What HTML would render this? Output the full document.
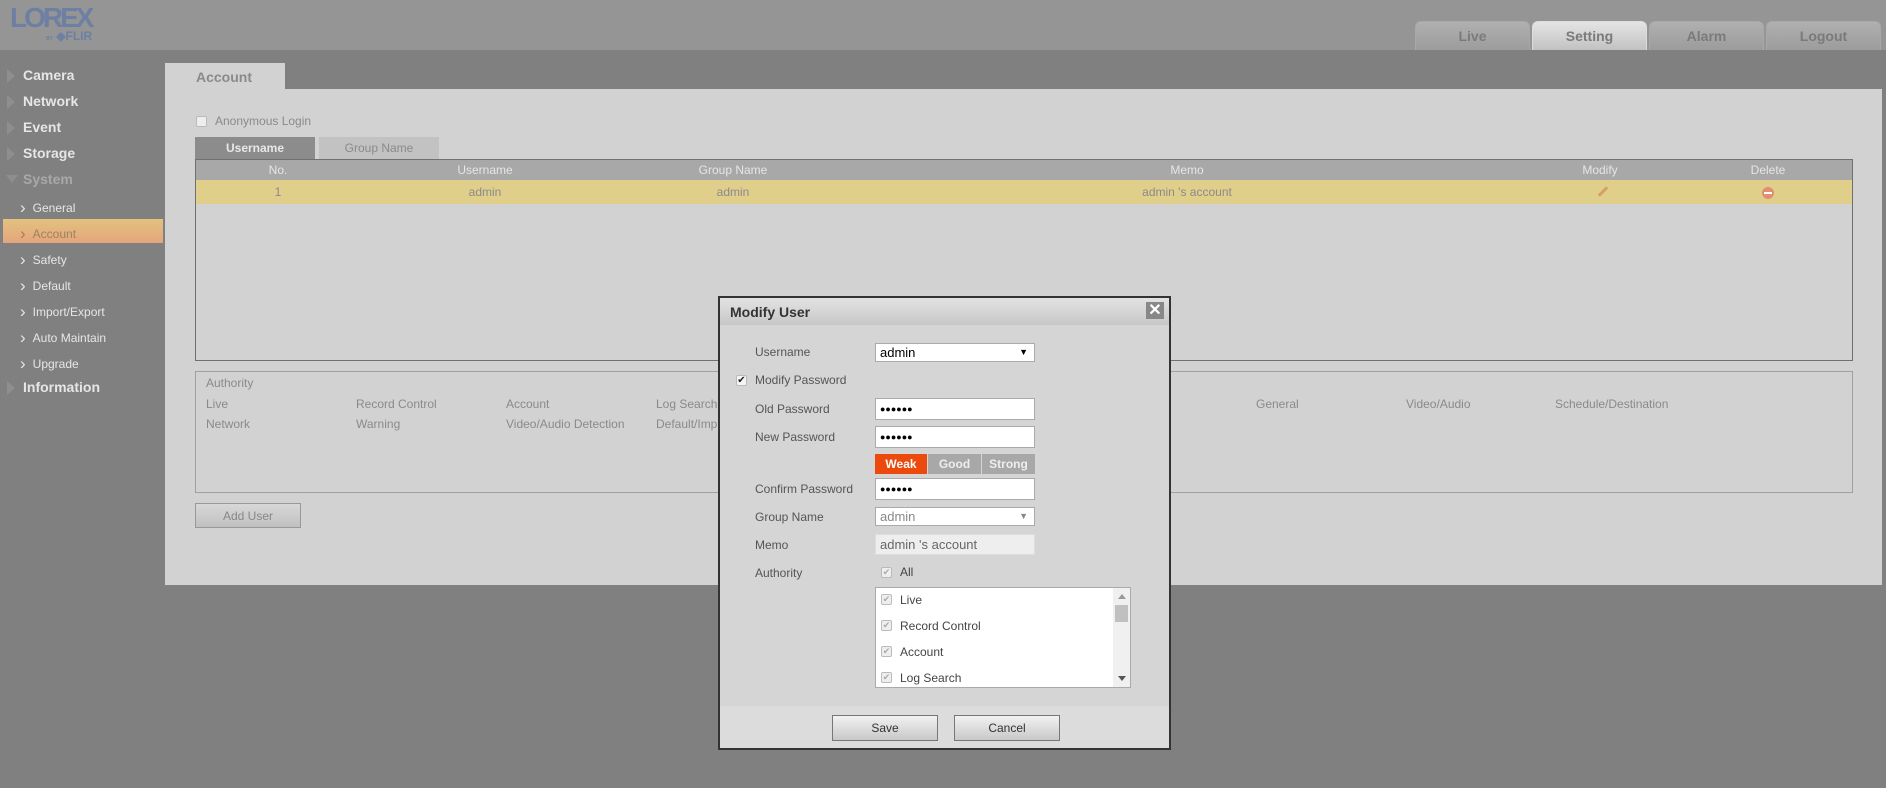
<!DOCTYPE html>
<html><head><style>
*{margin:0;padding:0;box-sizing:border-box}
body{width:1886px;height:788px;background:#808080;font-family:"Liberation Sans",Arial,sans-serif;position:relative;overflow:hidden}
.a{position:absolute}
.hdr{left:0;top:0;width:1886px;height:50px;background:#959595}
.tab{top:21px;height:29px;width:115px;border-radius:6px 6px 0 0;background:linear-gradient(#b0b0b0,#9c9c9c);border:1px solid #a8a8a8;border-bottom:none;color:#7a7a7a;font-weight:bold;font-size:14px;text-align:center;line-height:29px}
.side{left:23px;font-size:14px;font-weight:bold;color:#e6e6e6}
.tri{left:7px;width:0;height:0;border-left:8px solid #8e8e8e;border-top:7px solid transparent;border-bottom:7px solid transparent}
.sub{left:20px;font-size:12px;color:#e6e6e6}
.sub:before{content:"›";font-size:17px;margin-right:7px;position:relative;top:1px}
.t{font-size:12px;color:#8a8a8a;white-space:nowrap}
.lbl{left:755px;font-size:12px;color:#555}
.inp{left:875px;width:160px;background:#fff;border:1px solid #aaa;font-size:13px;padding-left:4px;color:#000}
.cb{width:11px;height:11px;border:1px solid #bbb;background:#eee;border-radius:2px;font-size:9px;line-height:9px;color:#aaa;text-align:center}
.btn{height:26px;width:106px;border:1px solid #777;background:linear-gradient(#f2f2f2,#c8c8c8);font-size:12px;color:#333;text-align:center;line-height:24px}
</style></head><body>
<div class="a hdr"></div>
<div class="a" style="left:10px;top:2px;font:bold 28px 'Liberation Sans';color:#6d7fa3;letter-spacing:-3px">LOREX</div>
<div class="a" style="left:46px;top:29px;font:bold 12px 'Liberation Sans';color:#6d7fa3"><span style="font-size:5px">BY</span> ◆FLIR</div>
<div class="a tab" style="left:1415px">Live</div>
<div class="a tab" style="left:1532px;background:linear-gradient(#e4e4e4,#c2c2c2);border-color:#ddd">Setting</div>
<div class="a tab" style="left:1649px">Alarm</div>
<div class="a tab" style="left:1766px">Logout</div>

<div class="a tri" style="top:69px"></div><div class="a side" style="top:67px">Camera</div>
<div class="a tri" style="top:95px"></div><div class="a side" style="top:93px">Network</div>
<div class="a tri" style="top:121px"></div><div class="a side" style="top:119px">Event</div>
<div class="a tri" style="top:147px"></div><div class="a side" style="top:145px">Storage</div>
<div class="a" style="left:6px;top:175px;width:0;height:0;border-top:8px solid #8e8e8e;border-left:6px solid transparent;border-right:6px solid transparent"></div><div class="a side" style="top:171px;color:#a8a8a8">System</div>
<div class="a sub" style="top:197px">General</div>
<div class="a" style="left:3px;top:219px;width:160px;height:24px;background:linear-gradient(#e3c27e,#e4a57d)"></div>
<div class="a sub" style="top:223px;color:#a08060">Account</div>
<div class="a sub" style="top:249px">Safety</div>
<div class="a sub" style="top:275px">Default</div>
<div class="a sub" style="top:301px">Import/Export</div>
<div class="a sub" style="top:327px">Auto Maintain</div>
<div class="a sub" style="top:353px">Upgrade</div>
<div class="a tri" style="top:381px"></div><div class="a side" style="top:379px">Information</div>

<div class="a" style="left:165px;top:89px;width:1717px;height:496px;background:#d2d2d2"></div>
<div class="a" style="left:165px;top:63px;width:120px;height:27px;background:#d2d2d2;font:bold 14px 'Liberation Sans';color:#8a8a8a;padding:6px 0 0 31px">Account</div>
<div class="a cb" style="left:196px;top:116px"></div><div class="a t" style="left:215px;top:114px">Anonymous Login</div>
<div class="a" style="left:195px;top:137px;width:120px;height:22px;background:#8c8c8c;color:#e8e8e8;font:bold 12px 'Liberation Sans';text-align:center;line-height:22px">Username</div>
<div class="a" style="left:319px;top:137px;width:120px;height:22px;background:#c2c2c2;color:#8a8a8a;font-size:12px;text-align:center;line-height:22px">Group Name</div>
<div class="a" style="left:195px;top:159px;width:1658px;height:202px;border:1px solid #707070"></div>
<div class="a" style="left:196px;top:160px;width:1656px;height:20px;background:#a8a8a8"></div>
<div class="a" style="left:196px;top:180px;width:1656px;height:24px;background:#e0cf8a"></div>
<div class="a t" style="left:278px;top:163px;color:#e6e6e6;transform:translateX(-50%)">No.</div>
<div class="a t" style="left:485px;top:163px;color:#e6e6e6;transform:translateX(-50%)">Username</div>
<div class="a t" style="left:733px;top:163px;color:#e6e6e6;transform:translateX(-50%)">Group Name</div>
<div class="a t" style="left:1187px;top:163px;color:#e6e6e6;transform:translateX(-50%)">Memo</div>
<div class="a t" style="left:1600px;top:163px;color:#e6e6e6;transform:translateX(-50%)">Modify</div>
<div class="a t" style="left:1768px;top:163px;color:#e6e6e6;transform:translateX(-50%)">Delete</div>
<div class="a t" style="left:278px;top:185px;transform:translateX(-50%)">1</div>
<div class="a t" style="left:485px;top:185px;transform:translateX(-50%)">admin</div>
<div class="a t" style="left:733px;top:185px;transform:translateX(-50%)">admin</div>
<div class="a t" style="left:1187px;top:185px;transform:translateX(-50%)">admin 's account</div>
<div class="a" style="left:1597px;top:190px;width:12px;height:3px;background:#d8a060;transform:rotate(-45deg)"></div>
<div class="a" style="left:1762px;top:187px;width:12px;height:12px;border-radius:50%;background:#e09070"><div style="margin:5px 2px;height:2px;background:#fff"></div></div>

<div class="a" style="left:195px;top:371px;width:1658px;height:122px;border:1px solid #a0a0a0"></div>
<div class="a t" style="left:206px;top:376px;font-size:12px">Authority</div>
<div class="a t" style="left:206px;top:397px">Live</div><div class="a t" style="left:356px;top:397px">Record Control</div><div class="a t" style="left:506px;top:397px">Account</div><div class="a t" style="left:656px;top:397px">Log Search</div><div class="a t" style="left:1160px;top:397px">n</div><div class="a t" style="left:1256px;top:397px">General</div><div class="a t" style="left:1406px;top:397px">Video/Audio</div><div class="a t" style="left:1555px;top:397px">Schedule/Destination</div>
<div class="a t" style="left:206px;top:417px">Network</div><div class="a t" style="left:356px;top:417px">Warning</div><div class="a t" style="left:506px;top:417px">Video/Audio Detection</div><div class="a t" style="left:656px;top:417px">Default/Imp</div>
<div class="a btn" style="left:195px;top:503px;width:106px;height:25px;border-color:#999;background:linear-gradient(#d8d8d8,#c0c0c0);color:#888">Add User</div>

<div class="a" style="left:718px;top:296px;width:453px;height:454px;border:2px solid #333;background:#d5d5d5"></div>
<div class="a" style="left:720px;top:298px;width:449px;height:27px;background:linear-gradient(#e2e2e2,#c8c8c8);font:bold 14px 'Liberation Sans';color:#333;padding:6px 0 0 10px">Modify User</div>
<div class="a" style="left:1146px;top:302px;width:18px;height:17px;background:#888;color:#fff;font:bold 16px 'Liberation Sans';text-align:center;line-height:17px">✕</div>
<div class="a lbl" style="top:345px">Username</div>
<div class="a inp" style="top:343px;height:19px;line-height:17px">admin<span style="position:absolute;right:6px;font-size:9px">▼</span></div>
<div class="a cb" style="left:736px;top:375px;background:#f4f4f4;color:#222;font-size:10px">✔</div><div class="a lbl" style="top:373px">Modify Password</div>
<div class="a lbl" style="top:402px">Old Password</div><div class="a inp" style="top:398px;height:22px;line-height:20px;font-size:9px">●●●●●●</div>
<div class="a lbl" style="top:430px">New Password</div><div class="a inp" style="top:426px;height:22px;line-height:20px;font-size:9px">●●●●●●</div>
<div class="a" style="left:875px;top:454px;width:52px;height:20px;background:#ec4a0c;color:#fff;font:bold 12px 'Liberation Sans';text-align:center;line-height:20px">Weak</div>
<div class="a" style="left:928px;top:454px;width:53px;height:20px;background:#a8a8a8;color:#eee;font:bold 12px 'Liberation Sans';text-align:center;line-height:20px">Good</div>
<div class="a" style="left:982px;top:454px;width:53px;height:20px;background:#a8a8a8;color:#eee;font:bold 12px 'Liberation Sans';text-align:center;line-height:20px">Strong</div>
<div class="a lbl" style="top:482px">Confirm Password</div><div class="a inp" style="top:478px;height:22px;line-height:20px;font-size:9px">●●●●●●</div>
<div class="a lbl" style="top:510px">Group Name</div><div class="a inp" style="top:507px;height:19px;line-height:17px;color:#888">admin<span style="position:absolute;right:6px;font-size:9px">▼</span></div>
<div class="a lbl" style="top:538px">Memo</div><div class="a inp" style="top:534px;height:21px;line-height:19px;background:#eee;border-color:#ddd;color:#666">admin 's account</div>
<div class="a lbl" style="top:566px">Authority</div>
<div class="a cb" style="left:881px;top:567px">✔</div><div class="a lbl" style="left:900px;top:565px;color:#444">All</div>
<div class="a" style="left:875px;top:587px;width:256px;height:101px;background:#fff;border:1px solid #aaa"></div>
<div class="a" style="left:1113px;top:588px;width:17px;height:99px;background:#f0f0f0"></div>
<div class="a" style="left:1115px;top:605px;width:13px;height:17px;background:#c0c0c0"></div>
<div class="a" style="left:1118px;top:594px;border-bottom:5px solid #999;border-left:4px solid transparent;border-right:4px solid transparent"></div>
<div class="a" style="left:1118px;top:676px;border-top:5px solid #555;border-left:4px solid transparent;border-right:4px solid transparent"></div>
<div class="a cb" style="left:881px;top:594px">✔</div><div class="a lbl" style="left:900px;top:593px;color:#444">Live</div>
<div class="a cb" style="left:881px;top:620px">✔</div><div class="a lbl" style="left:900px;top:619px;color:#444">Record Control</div>
<div class="a cb" style="left:881px;top:646px">✔</div><div class="a lbl" style="left:900px;top:645px;color:#444">Account</div>
<div class="a cb" style="left:881px;top:672px">✔</div><div class="a lbl" style="left:900px;top:671px;color:#444">Log Search</div>
<div class="a" style="left:720px;top:706px;width:449px;height:42px;background:#dcdcdc"></div>
<div class="a btn" style="left:832px;top:715px">Save</div>
<div class="a btn" style="left:954px;top:715px">Cancel</div>
</body></html>
